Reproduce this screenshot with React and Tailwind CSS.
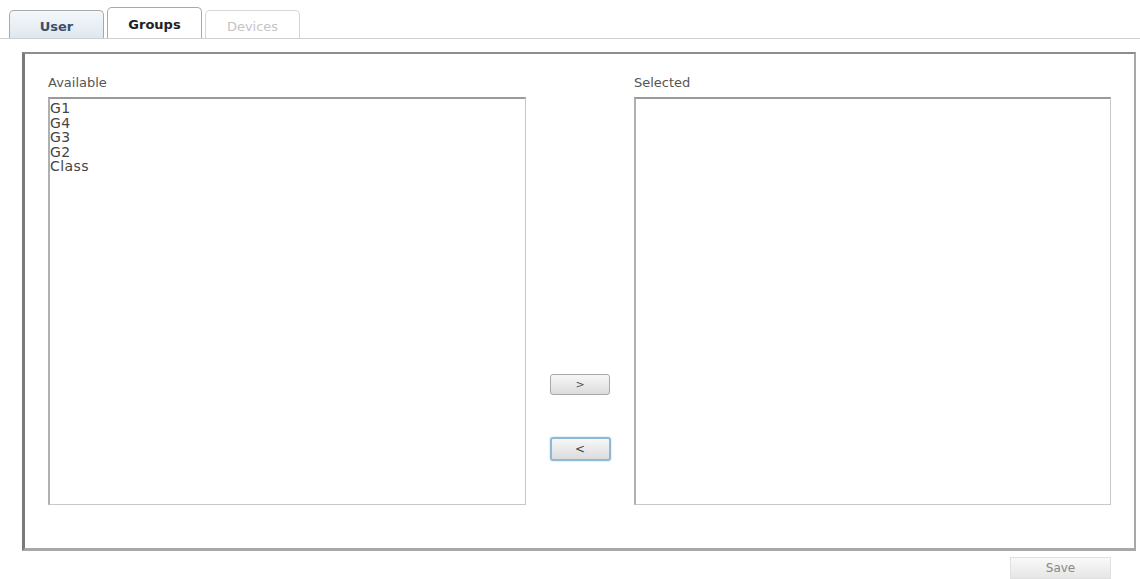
import React, { useState } from 'react';

const font = { fontFamily: '"DejaVu Sans", Verdana, sans-serif' };

const Tab = ({ label, active, disabled, onClick }) => (
  <button
    onClick={onClick}
    className={`w-[95px] rounded-t-[5px] border border-b-0 pt-[4px] text-[13px] font-bold ${
      active
        ? 'h-[31px] border-[#a9a9a9] bg-white text-[#222]'
        : disabled
        ? 'h-[28px] border-[#d6d6d6] bg-white font-normal text-[#c4c4c4]'
        : 'h-[28px] border-[#a9a9a9] bg-gradient-to-b from-[#f4f8fb] to-[#dfe8ef] text-[#3c4f68]'
    }`}
  >
    {label}
  </button>
);

const ListBox = ({ items, selected, onSelect }) => (
  <div className="h-[408px] overflow-y-auto border-t-2 border-l-2 border-r border-b border-t-[#9a9a9a] border-l-[#b0b0b0] border-r-[#c8c8c8] border-b-[#c8c8c8] bg-white pt-[2px]">
    {items.map((item) => (
      <div
        key={item}
        onClick={() => onSelect(item)}
        className={`cursor-default text-[14px] leading-[14.5px] tracking-[0.4px] ${
          selected === item ? 'bg-[#3874d8] text-white' : 'text-[#444]'
        }`}
      >
        {item}
      </div>
    ))}
  </div>
);

export default function App() {
  const [tab, setTab] = useState('Groups');
  const [available, setAvailable] = useState(['G1', 'G4', 'G3', 'G2', 'Class']);
  const [chosen, setChosen] = useState([]);
  const [pickLeft, setPickLeft] = useState(null);
  const [pickRight, setPickRight] = useState(null);

  const moveRight = () => {
    if (!pickLeft) return;
    setAvailable(available.filter((i) => i !== pickLeft));
    setChosen([...chosen, pickLeft]);
    setPickLeft(null);
  };

  const moveLeft = () => {
    if (!pickRight) return;
    setChosen(chosen.filter((i) => i !== pickRight));
    setAvailable([...available, pickRight]);
    setPickRight(null);
  };

  return (
    <div className="h-[579px] w-[1140px] overflow-hidden bg-white" style={font}>
      {/* Tabs */}
      <div className="flex items-end gap-[3px] border-b border-[#d0d0d0] pl-[9px] pt-[7px]">
        <Tab label="User" active={tab === 'User'} onClick={() => setTab('User')} />
        <Tab label="Groups" active={tab === 'Groups'} onClick={() => setTab('Groups')} />
        <Tab label="Devices" disabled />
      </div>

      {/* Panel */}
      <div className="ml-[22px] mt-[13px] h-[499px] w-[1114px] border-t-2 border-l-[3px] border-r-2 border-b-[3px] border-t-[#8d8d8d] border-l-[#7a7a7a] border-r-[#a8a8a8] border-b-[#a8a8a8] pl-[23px] pt-[22px]">
        <div className="grid grid-cols-[478px_108px_477px]">
          <div>
            <div className="mb-[6px] h-[15px] text-[13px] leading-[13px] text-[#555]">Available</div>
            <ListBox items={available} selected={pickLeft} onSelect={setPickLeft} />
          </div>

          <div className="flex flex-col items-center pt-[298px]">
            <button
              onClick={moveRight}
              className="h-[21px] w-[60px] rounded-[3px] border border-[#a8a8a8] bg-gradient-to-b from-[#f7f7f7] to-[#dcdcdc] text-[11px] leading-none text-[#555]"
            >
              &gt;
            </button>
            <button
              onClick={moveLeft}
              className="mt-[42px] h-[24px] w-[61px] rounded-[3px] border-2 border-[#8fb8d4] bg-gradient-to-b from-[#f7f7f7] to-[#dcdcdc] text-[12px] leading-none text-[#444] shadow-[0_0_2px_#a9cce6]"
            >
              &lt;
            </button>
          </div>

          <div>
            <div className="mb-[6px] h-[15px] text-[13px] leading-[13px] text-[#555]">Selected</div>
            <ListBox items={chosen} selected={pickRight} onSelect={setPickRight} />
          </div>
        </div>
      </div>

      {/* Footer */}
      <div className="flex justify-end pr-[29px] pt-[6px]">
        <button className="h-[22px] w-[101px] border border-[#e0e0e0] bg-gradient-to-b from-[#f9f9f9] to-[#e6e6e6] text-[12px] text-[#888]">
          Save
        </button>
      </div>
    </div>
  );
}
